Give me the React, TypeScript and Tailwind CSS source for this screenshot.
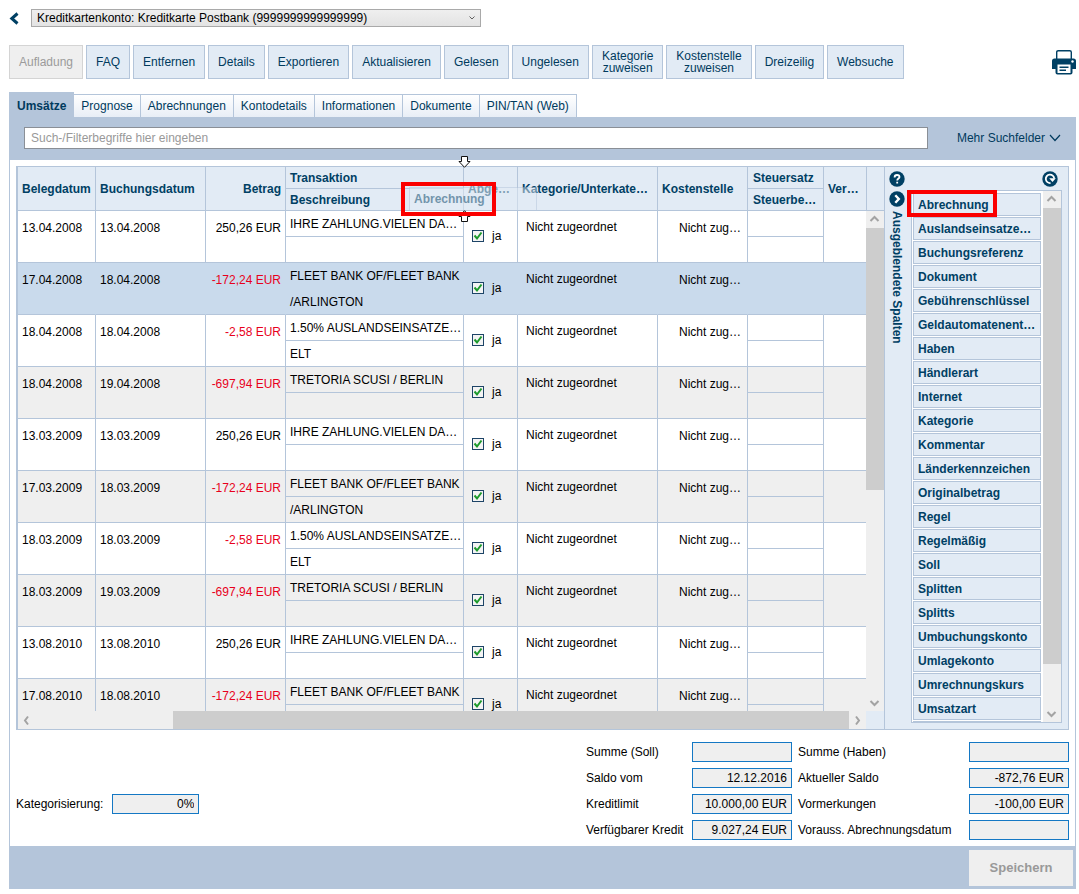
import { useState } from 'react';
import type { ReactNode } from 'react';
import clsx from 'clsx';

type Booking = {
	belegdatum: string;
	buchungsdatum: string;
	betrag: string;
	transaktion: string;
	beschreibung: string;
};

const ACTIONS = [
	'FAQ',
	'Entfernen',
	'Details',
	'Exportieren',
	'Aktualisieren',
	'Gelesen',
	'Ungelesen',
	'Kategorie\nzuweisen',
	'Kostenstelle\nzuweisen',
	'Dreizeilig',
	'Websuche',
];

const TABS = ['Prognose', 'Abrechnungen', 'Kontodetails', 'Informationen', 'Dokumente', 'PIN/TAN (Web)'];

const BOOKINGS: Booking[] = [
	{ belegdatum: '13.04.2008', buchungsdatum: '13.04.2008', betrag: '250,26 EUR', transaktion: 'IHRE ZAHLUNG.VIELEN DA…', beschreibung: '' },
	{ belegdatum: '17.04.2008', buchungsdatum: '18.04.2008', betrag: '-172,24 EUR', transaktion: 'FLEET BANK OF/FLEET BANK', beschreibung: '/ARLINGTON' },
	{ belegdatum: '18.04.2008', buchungsdatum: '18.04.2008', betrag: '-2,58 EUR', transaktion: '1.50% AUSLANDSEINSATZE…', beschreibung: 'ELT' },
	{ belegdatum: '18.04.2008', buchungsdatum: '19.04.2008', betrag: '-697,94 EUR', transaktion: 'TRETORIA SCUSI / BERLIN', beschreibung: '' },
	{ belegdatum: '13.03.2009', buchungsdatum: '13.03.2009', betrag: '250,26 EUR', transaktion: 'IHRE ZAHLUNG.VIELEN DA…', beschreibung: '' },
	{ belegdatum: '17.03.2009', buchungsdatum: '18.03.2009', betrag: '-172,24 EUR', transaktion: 'FLEET BANK OF/FLEET BANK', beschreibung: '/ARLINGTON' },
	{ belegdatum: '18.03.2009', buchungsdatum: '18.03.2009', betrag: '-2,58 EUR', transaktion: '1.50% AUSLANDSEINSATZE…', beschreibung: 'ELT' },
	{ belegdatum: '18.03.2009', buchungsdatum: '19.03.2009', betrag: '-697,94 EUR', transaktion: 'TRETORIA SCUSI / BERLIN', beschreibung: '' },
	{ belegdatum: '13.08.2010', buchungsdatum: '13.08.2010', betrag: '250,26 EUR', transaktion: 'IHRE ZAHLUNG.VIELEN DA…', beschreibung: '' },
	{ belegdatum: '17.08.2010', buchungsdatum: '18.08.2010', betrag: '-172,24 EUR', transaktion: 'FLEET BANK OF/FLEET BANK', beschreibung: '' },
];

const HIDDEN_COLUMNS = [
	'Abrechnung',
	'Auslandseinsatze…',
	'Buchungsreferenz',
	'Dokument',
	'Gebührenschlüssel',
	'Geldautomatenent…',
	'Haben',
	'Händlerart',
	'Internet',
	'Kategorie',
	'Kommentar',
	'Länderkennzeichen',
	'Originalbetrag',
	'Regel',
	'Regelmäßig',
	'Soll',
	'Splitten',
	'Splitts',
	'Umbuchungskonto',
	'Umlagekonto',
	'Umrechnungskurs',
	'Umsatzart',
];

const SUMMARY: [string, string, string, string][] = [
	['Summe (Soll)', '', 'Summe (Haben)', ''],
	['Saldo vom', '12.12.2016', 'Aktueller Saldo', '-872,76 EUR'],
	['Kreditlimit', '10.000,00 EUR', 'Vormerkungen', '-100,00 EUR'],
	['Verfügbarer Kredit', '9.027,24 EUR', 'Vorauss. Abrechnungsdatum', ''],
];

const READONLY_FIELD =
	'h-5 min-w-0 border border-[#1478c4] bg-[#efefef] px-1 text-right text-xs text-black outline-none';

const CHEVRON_PATHS = {
	up: 'M1.5 7 5.5 3l4 4',
	down: 'M1.5 4l4 4 4-4',
	left: 'M7 1.5l-3 4 3 4',
	right: 'M4 1.5l3 4-3 4',
};

function Chevron({ dir, className, strokeWidth = 2 }: { dir: keyof typeof CHEVRON_PATHS; className?: string; strokeWidth?: number }) {
	return (
		<svg viewBox="0 0 11 11" className={clsx('h-[11px] w-[11px]', className)} fill="none" stroke="currentColor" strokeWidth={strokeWidth} aria-hidden="true">
			<path d={CHEVRON_PATHS[dir]} />
		</svg>
	);
}

function ScrollButton({ dir }: { dir: keyof typeof CHEVRON_PATHS }) {
	return (
		<button
			type="button"
			aria-label={`scroll ${dir}`}
			className="flex h-[17px] w-[17px] shrink-0 items-center justify-center text-[#a3a3a3]"
		>
			<Chevron dir={dir} />
		</button>
	);
}

function PrinterIcon() {
	return (
		<svg viewBox="0 0 24 25" className="h-[25px] w-6" aria-hidden="true">
			<path d="M4.700 9V2.200Q4.700 .7 6.200 .7h11.600q1.500 0 1.500 1.500V9" fill="#fff" stroke="#004064" strokeWidth="1.400" />
			<path d="M2.500 8.500h19A2.500 2.500 0 0 1 24 11v8h-3.500v3.500q0 2-2 2h-13q-2 0-2-2V19H0v-8a2.500 2.500 0 0 1 2.500-2.500Z" fill="#004064" />
			<circle cx="20.500" cy="11.500" r="1.200" fill="#fff" />
			<path d="M5.500 14.500h13V23h-13z" fill="#fff" />
			<path d="M7.500 17.300h9M7.500 20.300h6.500" stroke="#004064" strokeWidth="1.400" />
		</svg>
	);
}

function RoundIcon({ label, children }: { label: string; children: ReactNode }) {
	return (
		<button type="button" aria-label={label} className="block h-4 w-4 shrink-0">
			<svg viewBox="0 0 16 16" className="h-4 w-4" fill="none" stroke="#fff" strokeWidth="2">
				<circle cx="8" cy="8" r="7.700" fill="#004064" stroke="none" />
				{children}
			</svg>
		</button>
	);
}

function DropArrow({ className, up }: { className: string; up?: boolean }) {
	return (
		<svg viewBox="0 0 13 12" className={clsx('absolute h-3 w-[13px]', className)} fill="#fff" stroke="#111" aria-hidden="true">
			<path d={up ? 'M6.500 .7 12 6.500H9.500v5h-6v-5H1Z' : 'M3.500 .5h6v5H12l-5.500 5.800L1 5.500h2.500Z'} />
		</svg>
	);
}

function HeadCell({ children, className }: { children: ReactNode; className?: string }) {
	return (
		<th
			scope="col"
			className={clsx('overflow-hidden border-r border-b border-[#b4c5da] bg-[#e2ebf5] px-1 text-left font-bold whitespace-nowrap', className)}
		>
			{children}
		</th>
	);
}

function SplitHeadCell({ top, bottom, className = 'px-1' }: { top: string; bottom: string; className?: string }) {
	return (
		<th scope="col" className="overflow-hidden border-r border-b border-[#b4c5da] bg-[#e2ebf5] text-left font-bold whitespace-nowrap">
			<div className={clsx('h-[22px] border-b border-[#b4c5da] leading-[22px]', className)}>{top}</div>
			<div className={clsx('h-[21px] leading-[22px]', className)}>{bottom}</div>
		</th>
	);
}

function BookingRow({ booking, index, selected, onSelect }: { booking: Booking; index: number; selected: boolean; onSelect: () => void }) {
	const [billed, setBilled] = useState(true);
	const negative = booking.betrag.startsWith('-');
	const cell = clsx(
		'overflow-hidden border-r border-b border-b-[#b4c5da] align-top whitespace-nowrap',
		selected ? 'border-r-transparent' : 'border-r-[#b4c5da]',
	);
	const upper = clsx('h-[26px] border-b px-1 leading-[26px]', selected ? 'border-transparent' : 'border-[#b4c5da]');

	return (
		<tr onClick={onSelect} className={selected ? 'bg-[#c9daec]' : index % 2 ? 'bg-[#efefef]' : 'bg-white'}>
			<td className={clsx(cell, 'px-1 pt-[9px]')}>{booking.belegdatum}</td>
			<td className={clsx(cell, 'px-1 pt-[9px]')}>{booking.buchungsdatum}</td>
			<td className={clsx(cell, 'px-1 pt-[9px] text-right', negative && 'text-[#e8001c]')}>{booking.betrag}</td>
			<td className={cell}>
				<div className={upper}>{booking.transaktion}</div>
				<div className="h-[25px] px-1 leading-[26px]">{booking.beschreibung}</div>
			</td>
			<td className={clsx(cell, 'pt-[17px] pl-2')}>
				<label className="flex h-4 items-center gap-2">
					<span className="relative flex h-3 w-3">
						<input
							type="checkbox"
							checked={billed}
							onChange={() => setBilled(!billed)}
							className="h-3 w-3 appearance-none border border-[#1d4467] bg-[#f4f4f4]"
						/>
						{billed ? (
							<svg viewBox="0 0 12 12" className="pointer-events-none absolute inset-0 h-3 w-3" fill="none" stroke="#1d9a2c" strokeWidth="2" aria-hidden="true">
								<path d="M2.500 5.500 5 8.500l4.500-6" />
							</svg>
						) : null}
					</span>
					ja
				</label>
			</td>
			<td className={clsx(cell, 'px-2 pt-2')}>Nicht zugeordnet</td>
			<td className={clsx(cell, 'pt-[9px] pr-[6px] text-right')}>Nicht zug…</td>
			<td className={cell}>
				<div className={upper} />
			</td>
			<td className="border-b border-[#b4c5da]" />
		</tr>
	);
}

function BookingTable() {
	const [selected, setSelected] = useState(1);

	return (
		<div className="flex min-w-0 flex-1 flex-col border-l border-[#b4c5da]">
			<div className="flex h-[544px]">
				<div className="min-w-0 flex-1 overflow-hidden">
					<table className="w-full table-fixed border-separate border-spacing-0 leading-4">
						<colgroup>
							<col className="w-[78px]" />
							<col className="w-[110px]" />
							<col className="w-[80px]" />
							<col className="w-[178px]" />
							<col className="w-[54px]" />
							<col />
							<col className="w-[90px]" />
							<col className="w-[76px]" />
							<col className="w-[42px]" />
						</colgroup>
						<thead className="text-[#004064]">
							<tr>
								<HeadCell>Belegdatum</HeadCell>
								<HeadCell>Buchungsdatum</HeadCell>
								<HeadCell className="text-right">Betrag</HeadCell>
								<SplitHeadCell top="Transaktion" bottom="Beschreibung" />
								<HeadCell>
									<span className="relative z-10 text-[#7f9fb4]">Abge…</span>
								</HeadCell>
								<HeadCell>Kategorie/Unterkate…</HeadCell>
								<HeadCell>Kostenstelle</HeadCell>
								<SplitHeadCell top="Steuersatz" bottom="Steuerbe…" className="px-[5px]" />
								<HeadCell className="border-r-0">Ver…</HeadCell>
							</tr>
						</thead>
						<tbody>
							{BOOKINGS.map((booking, index) => (
								<BookingRow
									key={index}
									booking={booking}
									index={index}
									selected={index === selected}
									onSelect={() => setSelected(index)}
								/>
							))}
						</tbody>
					</table>
				</div>
				<div className="flex w-[18px] shrink-0 flex-col bg-[#efefef]">
					<div className="h-11 border-b border-l border-[#b4c5da] bg-[#e2ebf5]" />
					<ScrollButton dir="up" />
					<div className="h-[262px] bg-[#cdcdcd]" />
					<div className="flex-1" />
					<ScrollButton dir="down" />
				</div>
			</div>
			<div className="flex h-[18px]">
				<div className="flex min-w-0 flex-1 items-center bg-[#efefef]">
					<ScrollButton dir="left" />
					<div className="w-[138px] shrink-0" />
					<div className="h-[18px] flex-1 bg-[#cdcdcd]" />
					<ScrollButton dir="right" />
				</div>
				<div className="w-[18px] bg-[#e2ebf5]" />
			</div>
		</div>
	);
}

function HiddenColumns() {
	return (
		<aside className="flex w-[184px] shrink-0 border-l border-[#b4c5da] bg-[#e2ebf5] font-bold text-[#004064]">
			<div className="flex w-6 shrink-0 flex-col items-center gap-1 pt-1">
				<RoundIcon label="Hilfe">
					<path d="M5.600 6.400c0-1.500 1-2.400 2.400-2.400s2.500.9 2.500 2.100c0 1.500-2.300 1.500-2.300 3.400M8.200 10.700v1.800" strokeWidth="1.800" />
				</RoundIcon>
				<RoundIcon label="Einklappen">
					<path d="M6.300 4.300 9.800 8l-3.500 3.700" strokeWidth="2.400" />
				</RoundIcon>
				<span className="[writing-mode:vertical-rl] leading-4 whitespace-nowrap">Ausgeblendete Spalten</span>
			</div>
			<div className="flex min-w-0 flex-1 flex-col pt-1 pr-[6px] pl-[2px]">
				<div className="mb-[3px] flex justify-end pr-1">
					<RoundIcon label="Zurücksetzen">
						<path d="M8.500 12A4.200 4.200 0 1 1 12.200 7.500" strokeWidth="1.800" />
						<path d="M7.200 7.300h6.600l-3.300 3.700Z" fill="#fff" stroke="none" />
					</RoundIcon>
				</div>
				<div className="relative flex h-[533px] border border-[#b4c5da] bg-white">
					<ul className="flex min-w-0 flex-1 flex-col gap-px overflow-hidden px-px pt-[2px]">
						{HIDDEN_COLUMNS.map((name) => (
							<li key={name} className="h-[23px] shrink-0 cursor-move border border-[#b4c5da] bg-[#e2ebf5] px-1 leading-[22px] whitespace-nowrap">
								{name}
							</li>
						))}
						<li className="h-[23px] shrink-0 border border-[#b4c5da] bg-[#e2ebf5]" />
					</ul>
					<div className="ml-px flex w-[18px] shrink-0 flex-col bg-[#efefef]">
						<ScrollButton dir="up" />
						<div className="h-[456px] bg-[#cdcdcd]" />
						<div className="flex-1" />
						<ScrollButton dir="down" />
					</div>
					<div className="pointer-events-none absolute -top-px -left-[5px] h-[27px] w-[90px] border-4 border-[#fb0000]" />
				</div>
			</div>
		</aside>
	);
}

// Column header being dragged between "Transaktion" and "Abgerechnet"
function DragPreview() {
	return (
		<div className="pointer-events-none">
			<div className="absolute top-5 left-[392px] h-6 w-32 border border-[#b4c5da] bg-[#e2ebf5] px-1 leading-[22px] font-bold text-[#004064] opacity-50">
				Abrechnung
			</div>
			<DropArrow className="-top-[11px] left-[441px]" />
			<DropArrow className="top-[43px] left-[441px]" up />
			<div className="absolute top-[15px] left-[384px] z-20 h-[34px] w-[95px] border-4 border-[#fb0000]" />
		</div>
	);
}

export default function App() {
	return (
		<div className="bg-white pt-[9px] pr-[3px] pl-[9px] font-['Liberation_Sans',Arial,sans-serif] text-xs leading-4 text-black">
			<header className="flex items-center">
				<button type="button" aria-label="Zurück" className="w-[22px] text-[#004064]">
					<svg viewBox="0 0 10 13" className="h-[13px] w-[10px]" fill="none" stroke="currentColor" strokeWidth="3" aria-hidden="true">
						<path d="M8.500 1.500 2.800 6.500l5.700 5" />
					</svg>
				</button>
				<div className="relative w-[450px]">
					<select
						aria-label="Konto"
						className="block h-[18px] w-full appearance-none border border-[#a9a9a9] bg-linear-to-b from-[#efefef] to-[#e3e3e3] px-[5px] text-xs leading-4 text-black"
					>
						<option>Kreditkartenkonto: Kreditkarte Postbank (9999999999999999)</option>
					</select>
					<svg viewBox="0 0 6 4" className="pointer-events-none absolute top-[7px] right-[6px] h-1 w-[6px]" fill="none" stroke="#606060" aria-hidden="true">
						<path d="M.5 .5 3 3 5.500 .5" />
					</svg>
				</div>
			</header>

			<div className="mt-[18px] flex items-center gap-[3px] text-[#003a5d]">
				<button type="button" disabled className="h-[34px] border border-[#d4d4d4] bg-[#efefef] px-[9px] text-[#9b9b9b]">
					Aufladung
				</button>
				{ACTIONS.map((action) => (
					<button
						key={action}
						type="button"
						className="h-[34px] border border-[#b4c5da] bg-[#e2ebf5] px-[9px] leading-3 whitespace-pre"
					>
						{action}
					</button>
				))}
				<button type="button" aria-label="Drucken" className="ml-auto">
					<PrinterIcon />
				</button>
			</div>

			<nav className="mt-[13px] flex items-end text-[#003a5d]">
				<button type="button" className="h-[25px] bg-[#b4c5da] px-2 pt-[2px] font-bold">
					Umsätze
				</button>
				{TABS.map((tab) => (
					<button
						key={tab}
						type="button"
						className="h-[23px] border-t border-r border-[#b4c5da] bg-linear-to-b from-white to-[#e8eef6] px-[7px]"
					>
						{tab}
					</button>
				))}
			</nav>

			<div className="flex h-[43px] items-start bg-[#b4c5da] px-[15px] pt-[10px]">
				<input
					type="text"
					aria-label="Suche"
					placeholder="Such-/Filterbegriffe hier eingeben"
					className="h-[22px] min-w-0 flex-1 border border-[#8a8f96] bg-white px-[6px] text-xs outline-none placeholder:text-[#999999]"
				/>
				<button type="button" className="ml-[29px] flex h-[22px] items-center gap-1 text-[#003a5d]">
					Mehr Suchfelder
					<svg viewBox="0 0 12 8" className="h-2 w-3" fill="none" stroke="currentColor" strokeWidth="1.200" aria-hidden="true">
						<path d="M1 1l5 5.500L11 1" />
					</svg>
				</button>
			</div>

			<main className="border-x border-[#b4c5da] px-[6px] pt-[6px]">
				<div className="relative flex border border-[#b4c5da]">
					<BookingTable />
					<HiddenColumns />
					<DragPreview />
				</div>

				<div className="flex items-center justify-between pt-3 pb-[6px]">
					<div className="mt-[26px] flex items-center gap-[9px]">
						<label htmlFor="kategorisierung">Kategorisierung:</label>
						<input id="kategorisierung" readOnly value="0%" className={clsx(READONLY_FIELD, 'w-[87px]')} />
					</div>
					<div className="grid grid-cols-[106px_106px_171px_100px] items-center gap-y-[6px]">
						{SUMMARY.map(([leftLabel, leftValue, rightLabel, rightValue]) => (
							<div key={leftLabel} className="contents">
								<label htmlFor={leftLabel}>{leftLabel}</label>
								<input id={leftLabel} readOnly value={leftValue} className={clsx(READONLY_FIELD, 'mr-[6px]')} />
								<label htmlFor={rightLabel}>{rightLabel}</label>
								<input id={rightLabel} readOnly value={rightValue} className={READONLY_FIELD} />
							</div>
						))}
					</div>
				</div>
			</main>

			<footer className="flex h-[43px] items-center justify-end bg-[#b4c5da] pr-[3px]">
				<button type="button" disabled className="h-9 w-[104px] bg-[#efefef] text-[13px] font-bold text-[#999999]">
					Speichern
				</button>
			</footer>
		</div>
	);
}
